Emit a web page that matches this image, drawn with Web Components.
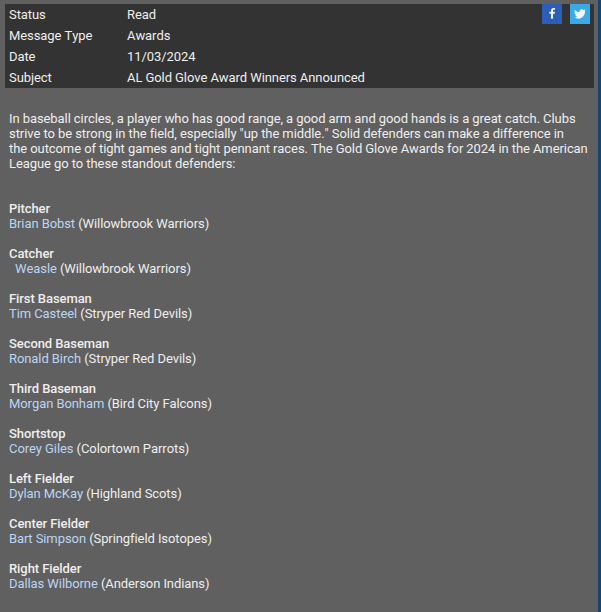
<!DOCTYPE html>
<html>
<head>
<meta charset="utf-8">
<style>
html, body { margin: 0; padding: 0; height: 100%; overflow: hidden; background: #606060; }
</style>
</head>
<body>
<msg-page>
  <msg-header>
    <msg-field label="Status">Read</msg-field>
    <msg-field label="Message Type">Awards</msg-field>
    <msg-field label="Date">11/03/2024</msg-field>
    <msg-field label="Subject">AL Gold Glove Award Winners Announced</msg-field>
  </msg-header>
  <msg-body>
    <p>In baseball circles, a player who has good range, a good arm and good hands is a great catch. Clubs strive to be strong in the field, especially "up the middle." Solid defenders can make a difference in<br>the outcome of tight games and tight pennant races. The Gold Glove Awards for 2024 in the American League go to these standout defenders:</p>
    <award-row position="Pitcher" player="Brian Bobst" team="Willowbrook Warriors"></award-row>
    <award-row position="Catcher" player="Weasle" team="Willowbrook Warriors" indent></award-row>
    <award-row position="First Baseman" player="Tim Casteel" team="Stryper Red Devils"></award-row>
    <award-row position="Second Baseman" player="Ronald Birch" team="Stryper Red Devils"></award-row>
    <award-row position="Third Baseman" player="Morgan Bonham" team="Bird City Falcons"></award-row>
    <award-row position="Shortstop" player="Corey Giles" team="Colortown Parrots"></award-row>
    <award-row position="Left Fielder" player="Dylan McKay" team="Highland Scots"></award-row>
    <award-row position="Center Fielder" player="Bart Simpson" team="Springfield Isotopes"></award-row>
    <award-row position="Right Fielder" player="Dallas Wilborne" team="Anderson Indians"></award-row>
  </msg-body>
</msg-page>
<script>
class MsgPage extends HTMLElement {
    constructor() {
        super();
        this.attachShadow({ mode: 'open' });
        this.shadowRoot.innerHTML = `
            <style>
                :host {
                    display: flex;
                    height: 612px;
                    background: #606060;
                    color: #eee;
                    font: 13px/15px Roboto, "Liberation Sans", sans-serif;
                    font-kerning: none;
                    letter-spacing: -0.08px;
                }
                .main {
                    flex: 1;
                    min-width: 0;
                    padding: 4px 4px 0 5px;
                }
                .edge {
                    width: 3px;
                    background: #124474;
                }
            </style>
            <div class="main"><slot></slot></div>
            <div class="edge"></div>
        `;
    }
}

class MsgHeader extends HTMLElement {
    constructor() {
        super();
        this.attachShadow({ mode: 'open' });
        this.shadowRoot.innerHTML = `
            <style>
                :host {
                    display: flex;
                    justify-content: space-between;
                    height: 84px;
                    background: #333;
                }
                .social {
                    display: flex;
                    gap: 8px;
                    padding: 0 4px 0 0;
                }
                .social svg { display: block; width: 20px; height: 20px; }
            </style>
            <div class="fields"><slot></slot></div>
            <div class="social">
                <svg viewBox="0 0 20 20"><rect width="20" height="20" fill="#2a5fb5"/><path transform="translate(1.800 1.200) scale(.84)" d="M11 16V10.200h2l.3-2.300H11V6.500c0-.7.2-1.100 1.100-1.100h1.300V3.300c-.3 0-1-.1-1.800-.1-1.800 0-3 1.100-3 3.100v1.600h-2v2.300h2V16z" fill="#f2f4fa"/></svg>
                <svg viewBox="0 0 20 20"><rect width="20" height="20" fill="#3aa9e6"/><path transform="translate(1.500 1.800) scale(.85)" d="M16.500 5.300c-.5.200-1 .4-1.600.4.600-.3 1-.9 1.200-1.500-.5.300-1.100.6-1.800.7a2.800 2.800 0 0 0-4.800 2.500C7.300 7.300 5.200 6.200 3.900 4.500c-.7 1.300-.3 2.900.9 3.700-.5 0-.9-.1-1.300-.3 0 1.300 1 2.500 2.300 2.800-.4.100-.8.100-1.300 0 .4 1.100 1.400 1.900 2.600 1.900A5.700 5.700 0 0 1 3.500 13.800a8 8 0 0 0 12.300-7.100c.3-.4.500-.9.700-1.400z" fill="#f2f8fc"/></svg>
            </div>
        `;
    }
}

class MsgField extends HTMLElement {
    constructor() {
        super();
        this.attachShadow({ mode: 'open' });
        this.shadowRoot.innerHTML = `
            <style>
                :host {
                    display: grid;
                    grid-template-columns: 118px auto;
                    height: 21px;
                    align-items: center;
                    padding-left: 4px;
                    white-space: nowrap;
                }
            </style>
            <span class="label"></span><span><slot></slot></span>
        `;
    }
    connectedCallback() {
        this.shadowRoot.querySelector('.label').textContent = this.getAttribute('label');
    }
}

class MsgBody extends HTMLElement {
    constructor() {
        super();
        this.attachShadow({ mode: 'open' });
        this.shadowRoot.innerHTML = `
            <style>
                :host {
                    display: block;
                    padding: 23px 4px 0 4px;
                }
                ::slotted(p) {
                    margin: 0 0 30px;
                }
            </style>
            <slot></slot>
        `;
    }
}

class AwardRow extends HTMLElement {
    constructor() {
        super();
        this.attachShadow({ mode: 'open' });
        this.shadowRoot.innerHTML = `
            <style>
                :host {
                    display: block;
                    margin-bottom: 15px;
                    white-space: nowrap;
                }
                b { display: block; font-weight: 500; }
                a { color: #bcd4f4; text-decoration: none; }
                :host([indent]) a { margin-left: 6px; }
            </style>
            <b></b><a href="#"></a> (<span class="team"></span>)
        `;
    }
    connectedCallback() {
        this.shadowRoot.querySelector('b').textContent = this.getAttribute('position');
        this.shadowRoot.querySelector('a').textContent = this.getAttribute('player');
        this.shadowRoot.querySelector('.team').textContent = this.getAttribute('team');
    }
}

customElements.define('msg-page', MsgPage);
customElements.define('msg-header', MsgHeader);
customElements.define('msg-field', MsgField);
customElements.define('msg-body', MsgBody);
customElements.define('award-row', AwardRow);
</script>
</body>
</html>
